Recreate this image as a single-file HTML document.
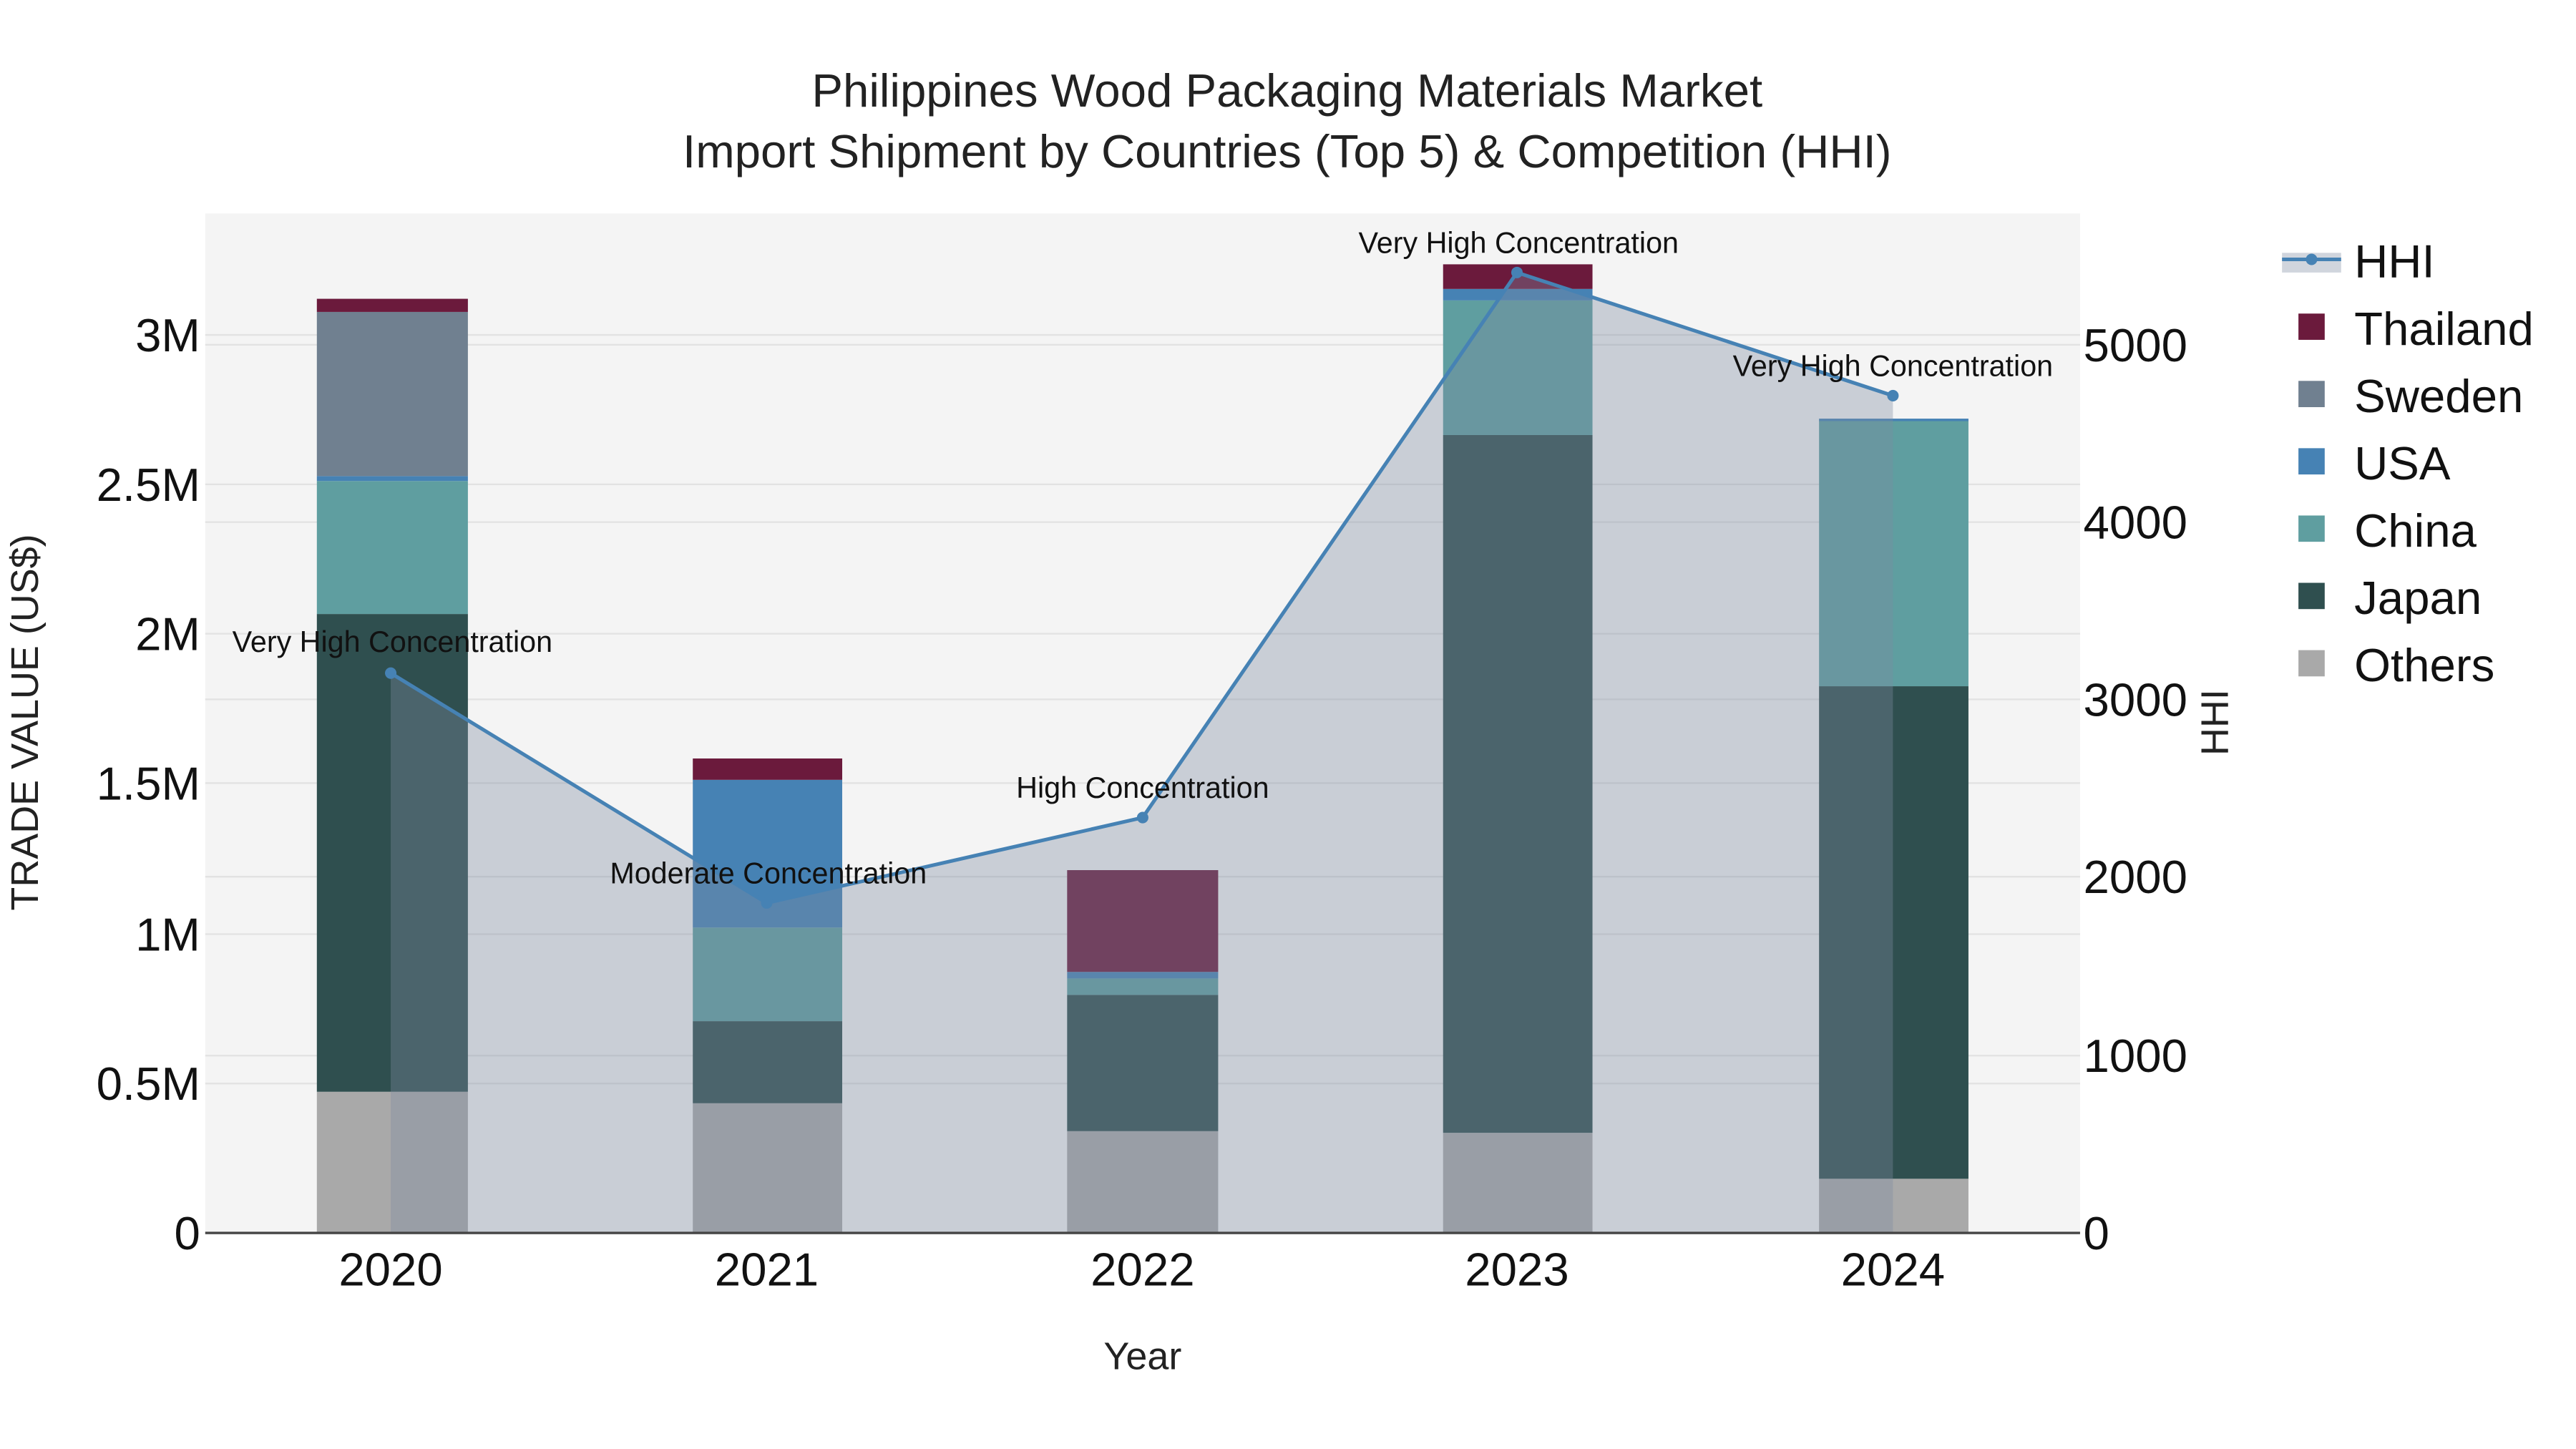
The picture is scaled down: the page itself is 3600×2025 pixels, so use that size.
<!DOCTYPE html>
<html><head><meta charset="utf-8"><style>
html,body{margin:0;padding:0;background:#fff;}
svg{display:block;font-family:"Liberation Sans",sans-serif;}
</style></head><body>
<svg width="3600" height="2025" viewBox="0 0 1569 882.6" preserveAspectRatio="xMinYMin meet" xmlns="http://www.w3.org/2000/svg">
<rect x="0" y="0" width="1569" height="882.6" fill="#fff"/>
<rect x="125" y="130" width="1142" height="621" fill="#f4f4f4"/>
<g stroke="#e2e2e2" stroke-width="1">
<line x1="125" x2="1267" y1="660" y2="660"/><line x1="125" x2="1267" y1="569" y2="569"/>
<line x1="125" x2="1267" y1="477" y2="477"/><line x1="125" x2="1267" y1="386" y2="386"/>
<line x1="125" x2="1267" y1="295" y2="295"/><line x1="125" x2="1267" y1="204" y2="204"/>
<line x1="125" x2="1267" y1="643" y2="643"/><line x1="125" x2="1267" y1="534" y2="534"/>
<line x1="125" x2="1267" y1="426" y2="426"/><line x1="125" x2="1267" y1="318" y2="318"/>
<line x1="125" x2="1267" y1="210" y2="210"/>
</g>
<g>
<rect x="193" y="665" width="92" height="86" fill="#a9a9a9"/>
<rect x="193" y="374" width="92" height="291" fill="#2f4f4f"/>
<rect x="193" y="293" width="92" height="81" fill="#5f9ea0"/>
<rect x="193" y="290" width="92" height="3" fill="#4682b4"/>
<rect x="193" y="190" width="92" height="100" fill="#708090"/>
<rect x="193" y="182" width="92" height="8" fill="#6b1a3c"/>

<rect x="422" y="672" width="91" height="79" fill="#a9a9a9"/>
<rect x="422" y="622" width="91" height="50" fill="#2f4f4f"/>
<rect x="422" y="565" width="91" height="57" fill="#5f9ea0"/>
<rect x="422" y="475" width="91" height="90" fill="#4682b4"/>
<rect x="422" y="462" width="91" height="13" fill="#6b1a3c"/>

<rect x="650" y="689" width="92" height="62" fill="#a9a9a9"/>
<rect x="650" y="606" width="92" height="83" fill="#2f4f4f"/>
<rect x="650" y="596" width="92" height="10" fill="#5f9ea0"/>
<rect x="650" y="592" width="92" height="4" fill="#4682b4"/>
<rect x="650" y="530" width="92" height="62" fill="#6b1a3c"/>

<rect x="879" y="690" width="91" height="61" fill="#a9a9a9"/>
<rect x="879" y="265" width="91" height="425" fill="#2f4f4f"/>
<rect x="879" y="183" width="91" height="82" fill="#5f9ea0"/>
<rect x="879" y="176" width="91" height="7" fill="#4682b4"/>
<rect x="879" y="161" width="91" height="15" fill="#6b1a3c"/>

<rect x="1108" y="718" width="91" height="33" fill="#a9a9a9"/>
<rect x="1108" y="418" width="91" height="300" fill="#2f4f4f"/>
<rect x="1108" y="256" width="91" height="162" fill="#5f9ea0"/>
<rect x="1108" y="255" width="91" height="1.5" fill="#4682b4"/>
</g>
<path d="M238,410 L467,550 L696,498 L924,166 L1153,241 L1153,751 L238,751 Z" fill="rgba(125,139,161,0.36)"/>
<polyline points="238,410 467,550 696,498 924,166 1153,241" fill="none" stroke="#4682b4" stroke-width="2.2"/>
<g fill="#4682b4">
<circle cx="238" cy="410" r="3.5"/><circle cx="467" cy="550" r="3.5"/><circle cx="696" cy="498" r="3.5"/>
<circle cx="924" cy="166" r="3.5"/><circle cx="1153" cy="241" r="3.5"/>
</g>
<line x1="125" x2="1267" y1="751" y2="751" stroke="#444" stroke-width="1.5"/>
<g font-size="18" fill="#111" text-anchor="middle">
<text x="239" y="397">Very High Concentration</text>
<text x="468" y="538">Moderate Concentration</text>
<text x="696" y="486">High Concentration</text>
<text x="925" y="154">Very High Concentration</text>
<text x="1153" y="229">Very High Concentration</text>
</g>
<g font-size="28.5" fill="#222" text-anchor="middle">
<text x="784" y="65">Philippines Wood Packaging Materials Market</text>
<text x="784" y="102">Import Shipment by Countries (Top 5) &amp; Competition (HHI)</text>
</g>
<g font-size="28.5" fill="#111" text-anchor="end">
<text x="122" y="761">0</text><text x="122" y="670">0.5M</text><text x="122" y="579">1M</text>
<text x="122" y="487">1.5M</text><text x="122" y="396">2M</text><text x="122" y="305">2.5M</text>
<text x="122" y="214">3M</text>
</g>
<g font-size="28.5" fill="#111" text-anchor="start">
<text x="1269" y="761">0</text><text x="1269" y="653">1000</text><text x="1269" y="544">2000</text>
<text x="1269" y="436">3000</text><text x="1269" y="328">4000</text><text x="1269" y="220">5000</text>
</g>
<g font-size="28.5" fill="#111" text-anchor="middle">
<text x="238" y="783">2020</text><text x="467" y="783">2021</text><text x="696" y="783">2022</text>
<text x="924" y="783">2023</text><text x="1153" y="783">2024</text>
</g>
<text x="696" y="834" font-size="23.5" fill="#222" text-anchor="middle">Year</text>
<text transform="translate(23,440) rotate(-90)" font-size="23.5" fill="#222" text-anchor="middle">TRADE VALUE (US$)</text>
<text transform="translate(1357,440) rotate(-90)" font-size="23.5" fill="#222" text-anchor="middle">HHI</text>
<rect x="1390" y="154" width="36" height="12" fill="rgba(125,139,161,0.36)"/>
<line x1="1390" x2="1426" y1="158" y2="158" stroke="#4682b4" stroke-width="2.2"/>
<circle cx="1408" cy="158" r="3.5" fill="#4682b4"/>
<g font-size="28.5" fill="#111">
<text x="1434" y="169">HHI</text>
<rect x="1400" y="191" width="16" height="16" fill="#6b1a3c"/><text x="1434" y="210">Thailand</text>
<rect x="1400" y="232" width="16" height="16" fill="#708090"/><text x="1434" y="251">Sweden</text>
<rect x="1400" y="273" width="16" height="16" fill="#4682b4"/><text x="1434" y="292">USA</text>
<rect x="1400" y="314" width="16" height="16" fill="#5f9ea0"/><text x="1434" y="333">China</text>
<rect x="1400" y="355" width="16" height="16" fill="#2f4f4f"/><text x="1434" y="374">Japan</text>
<rect x="1400" y="396" width="16" height="16" fill="#a9a9a9"/><text x="1434" y="415">Others</text>
</g>
</svg>
</body></html>
